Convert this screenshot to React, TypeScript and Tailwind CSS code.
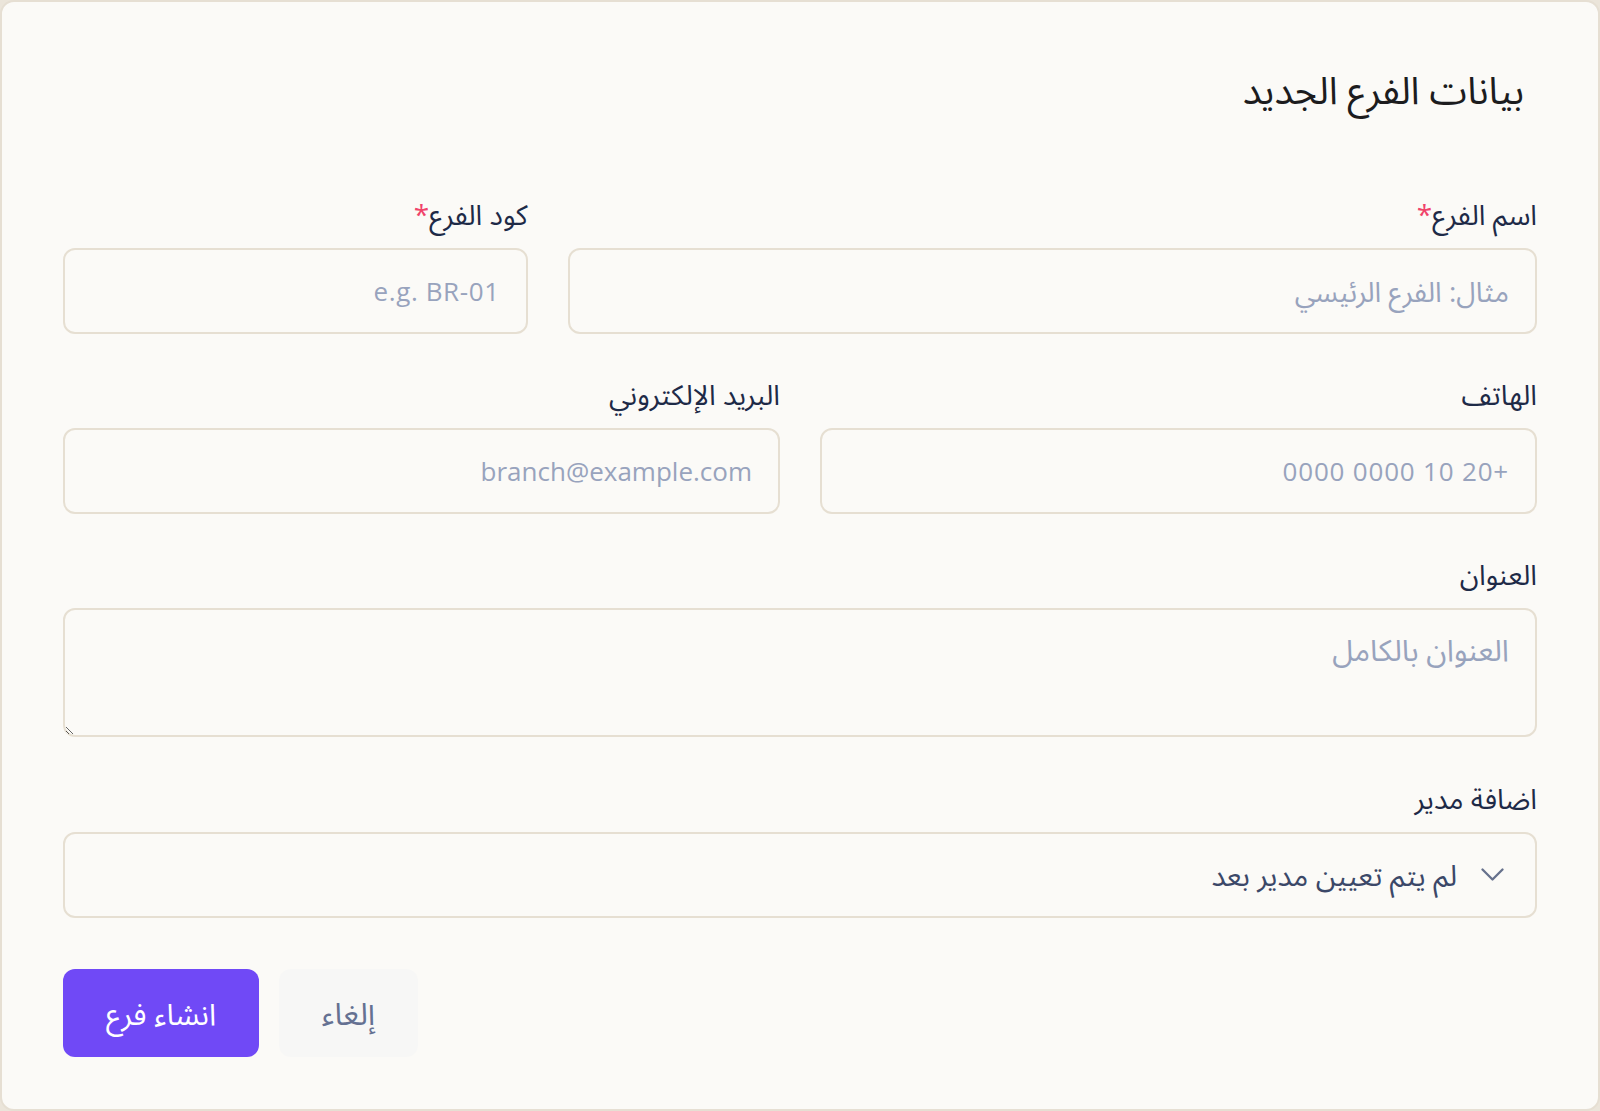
import React from "react";

const font = "font-['Open_Sans','Noto_Sans_Arabic','Noto_Naskh_Arabic','DejaVu_Sans',sans-serif]";

function Label({ text, required }: { text: string; required?: boolean }) {
  return (
    <label className="text-[28px] leading-[36px] text-[#1e2a47]">
      {text}
      {required && <span className="text-[#f0436a]">*</span>}
    </label>
  );
}

const inputBase =
  "h-[86px] w-full rounded-[12px] border-2 border-[#e6dfd2] bg-transparent px-[26px] text-[#1e2a47] outline-none placeholder:text-[#98a3bd]";

export default function App() {
  return (
    <div dir="rtl" className={`${font} min-h-[1111px] w-full bg-[#ebe5da]`}>
      <div className="flex h-[1111px] flex-col rounded-[14px] border-2 border-[#e6dfd3] bg-[#fbfaf7] px-[61px] pt-[62px]">
        <h2 className="pr-[13px] text-[38px] leading-[50px] text-[#1c1c1e]">بيانات الفرع الجديد</h2>

        <div className="mt-[82px] flex flex-col gap-[42px]">
          <div className="grid grid-cols-3 gap-x-[40px]">
            <div className="col-span-2 flex flex-col gap-[16px]">
              <Label text="اسم الفرع" required />
              <input className={`${inputBase} text-[28px]`} placeholder="مثال: الفرع الرئيسي" />
            </div>
            <div className="flex flex-col gap-[16px]">
              <Label text="كود الفرع" required />
              <input className={`${inputBase} text-[26px] tracking-[0.6px]`} placeholder="e.g. BR-01" />
            </div>
          </div>

          <div className="grid grid-cols-2 gap-x-[40px]">
            <div className="flex flex-col gap-[16px]">
              <Label text="الهاتف" />
              <input className={`${inputBase} text-[26px] tracking-[0.8px]`} placeholder="+20 10 0000 0000" />
            </div>
            <div className="flex flex-col gap-[16px]">
              <Label text="البريد الإلكتروني" />
              <input className={`${inputBase} text-[26px]`} placeholder="branch@example.com" />
            </div>
          </div>

          <div className="flex flex-col gap-[16px]">
            <Label text="العنوان" />
            <textarea
              className="h-[129px] w-full rounded-[12px] border-2 border-[#e6dfd2] bg-transparent px-[26px] pt-[20px] pb-[22px] text-[30px] leading-[40px] text-[#1e2a47] outline-none placeholder:text-[#98a3bd]"
              placeholder="العنوان بالكامل"
            />
          </div>

          <div className="flex flex-col gap-[16px] pt-[1px]">
            <Label text="اضافة مدير" />
            <div className="flex h-[86px] w-full items-center gap-[24px] rounded-[12px] border-2 border-[#e6dfd2] px-[31px]">
              <svg width="23" height="14" viewBox="0 0 23 14" fill="none" className="shrink-0">
                <path d="M1.5 1.5 L11.5 11.5 L21.5 1.5" stroke="#66718c" strokeWidth="2.3" strokeLinecap="round" strokeLinejoin="round" />
              </svg>
              <span className="text-[29px] text-[#3b4868]">لم يتم تعيين مدير بعد</span>
            </div>
          </div>
        </div>

        <div className="mt-[51px] flex justify-end gap-[20px]">
          <button className="h-[88px] w-[139px] rounded-[12px] bg-[#f7f7f6] text-[31px] text-[#657192]">إلغاء</button>
          <button className="h-[88px] w-[196px] rounded-[12px] bg-[#7049f6] text-[30px] text-white">انشاء فرع</button>
        </div>
      </div>
    </div>
  );
}
